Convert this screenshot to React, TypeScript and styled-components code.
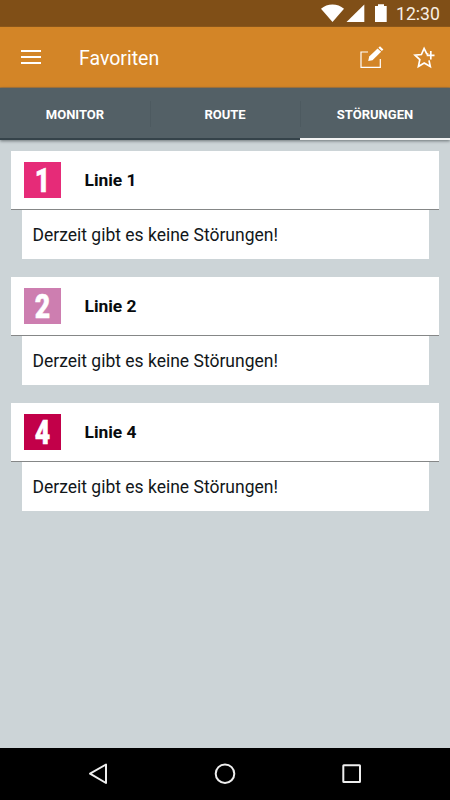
import React from "react";
import styled, { createGlobalStyle } from "styled-components";

const GlobalStyle = createGlobalStyle`
  *, *::before, *::after { box-sizing: border-box; }
  body { margin: 0; font-family: Roboto, sans-serif; background: #ccd4d7; }
`;

const Screen = styled.div`
  width: 450px;
  height: 800px;
  display: flex;
  flex-direction: column;
  background: #ccd4d7;
  overflow: hidden;
`;

const StatusBar = styled.header`
  height: 27px;
  flex: none;
  display: flex;
  justify-content: flex-end;
  background: #804f17;
  border-bottom: 1px solid #8b571a;
`;

const StatusIcons = styled.svg`
  width: 72px;
  height: 26px;
  fill: #fff;
`;

const Clock = styled.time`
  width: 58px;
  padding: 1px 0 0 4px;
  font-size: 17.6px;
  line-height: 26px;
  color: #f8efe5;
`;

const Toolbar = styled.div`
  height: 61px;
  flex: none;
  display: flex;
  align-items: center;
  background: #d38527;
  border-bottom: 1px solid #a8783e;
`;

const MenuIcon = styled.svg`
  width: 22px;
  height: 16px;
  margin-left: 20px;
  fill: #fff;
`;

const Title = styled.h1`
  margin: 3px 0 0 37px;
  flex: 1;
  font-size: 19.5px;
  font-weight: 400;
  line-height: 24px;
  color: #fff;
`;

const ActionIcons = styled.svg`
  width: 100px;
  height: 60px;
  fill: none;
  stroke: #fff;
`;

const Tabs = styled.nav`
  position: relative;
  height: 52px;
  flex: none;
  display: grid;
  grid-template-columns: repeat(3, 1fr);
  background: #536066;
  box-shadow: 0 1px 3px 0 rgba(40, 48, 52, 0.6);
`;

const Tab = styled.div<{ $active?: boolean }>`
  display: flex;
  justify-content: center;
  align-items: center;
  padding-top: 3px;
  font-size: 13px;
  font-weight: 700;
  color: #fff;
  border-bottom: 2px solid ${(p) => (p.$active ? "#f2f3f3" : "#35434a")};
  background: linear-gradient(#4d5a60, #4d5a60) 0 13px / 1px 26px no-repeat;
  &:first-child { background: none; }
`;

const Content = styled.main`
  flex: 1;
  padding: 11px 11px 0;
`;

const Card = styled.section`
  height: 108px;
  margin-bottom: 18px;
`;

const CardHeader = styled.div`
  height: 59px;
  display: flex;
  align-items: center;
  gap: 24px;
  padding-left: 13px;
  background: #fff;
  border-bottom: 1px solid #858787;
`;

const Badge = styled.div<{ $color: string }>`
  width: 36.5px;
  height: 36px;
  display: flex;
  align-items: center;
  justify-content: center;
  background: ${(p) => p.$color};
`;

const Digit = styled.span`
  padding-top: 1px;
  font-family: Roboto, sans-serif;
  font-size: 32.5px;
  font-weight: 900;
  line-height: 36px;
  color: #fff;
  -webkit-text-stroke: 0.5px #fff;
  transform: scaleX(0.82);
`;

const LineName = styled.h2`
  margin: 0;
  font-size: 17.4px;
  font-weight: 700;
  color: #080b0d;
`;

const CardBody = styled.p`
  height: 49px;
  margin: 0 10.5px 0 11px;
  padding: 1px 0 0 10.5px;
  background: #fff;
  color: #12171a;
  font-size: 17.5px;
  line-height: 48px;
  white-space: nowrap;
`;

const NavBar = styled.footer`
  height: 52px;
  flex: none;
  background: #000;
`;

const NavIcons = styled.svg`
  display: block;
  width: 450px;
  height: 52px;
  fill: none;
  stroke: #eee;
  stroke-width: 2;
  stroke-linejoin: round;
`;

const lines = [
  { number: 1, color: "#e62b78" },
  { number: 2, color: "#cd7eb0" },
  { number: 4, color: "#c20049" },
];

export default function App() {
  return (
    <Screen>
      <GlobalStyle />
      <StatusBar>
        <StatusIcons viewBox="320 0 72 26">
          <path d="M321 8.7C327.2 3 337.7 3 344 8.7L332.5 22Z" />
          <path d="M346.5 22L364.3 4.4V22Z" />
          <path d="M375 6H378V4.3H384V6H386.7V22H375Z" />
        </StatusIcons>
        <Clock>12:30</Clock>
      </StatusBar>
      <Toolbar>
        <MenuIcon viewBox="0 0 22 16">
          <path d="M1 1H21V3H1ZM1 7H21V9H1ZM1 13H21V15H1Z" />
        </MenuIcon>
        <Title>Favoriten</Title>
        <ActionIcons viewBox="350 27 100 60">
          <path d="M368 52H361V67.4H380.3V59" strokeWidth="1.2" />
          <path d="M368.2 61L369.2 56.6L377.6 48.5L381.1 51.8L372.5 60.2Z" fill="#fff" stroke="none" />
          <path d="M378.4 47.8L380 46.3L383.4 49.5L381.8 51.1Z" fill="#fff" stroke="none" />
          <path
            d="M428.3 54.1L426.7 53.7L424.1 48.4L421.4 54.5L415 55.1L419.8 59.6L418.4 66.6L424.2 63.1L430.3 66.6L429 60.4"
            strokeWidth="1.7"
          />
          <path d="M430.8 51V59.6M426.7 55.3H434.5" strokeWidth="1.7" />
        </ActionIcons>
      </Toolbar>
      <Tabs>
        <Tab>MONITOR</Tab>
        <Tab>ROUTE</Tab>
        <Tab $active>STÖRUNGEN</Tab>
      </Tabs>
      <Content>
        {lines.map((line) => (
          <Card key={line.number}>
            <CardHeader>
              <Badge $color={line.color}>
                <Digit>{line.number}</Digit>
              </Badge>
              <LineName>Linie {line.number}</LineName>
            </CardHeader>
            <CardBody>Derzeit gibt es keine Störungen!</CardBody>
          </Card>
        ))}
      </Content>
      <NavBar>
        <NavIcons viewBox="0 748 450 52">
          <path d="M90 773.7L106 764.5V783Z" />
          <circle cx="225" cy="773.7" r="9.3" />
          <rect x="343.3" y="765.3" width="16.7" height="16.7" rx="0.5" />
        </NavIcons>
      </NavBar>
    </Screen>
  );
}
